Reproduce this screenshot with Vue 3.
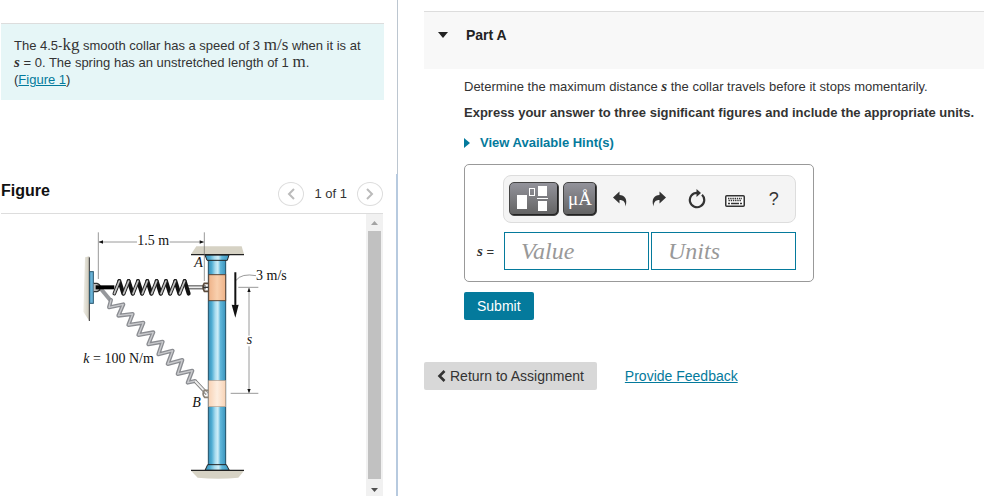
<template>
  <div class="page">
    <aside class="side">
      <section class="intro">
        <p class="problem">
          The 4.5-<span class="math">kg</span> smooth collar has a speed of 3
          <span class="math">m/s</span> when it is at<br />
          <i class="math var">s</i> = 0. The spring has an unstretched length of 1
          <span class="math">m</span>.<br />
          (<a href="#figure">Figure 1</a>)
        </p>
      </section>

      <section class="figure" id="figure">
        <header class="figure-header">
          <h2>Figure</h2>
          <div class="pager">
            <button type="button" class="round" aria-label="Previous figure">
              <svg width="10" height="14" viewBox="0 0 10 14">
                <path d="M8 2L3 7l5 5" fill="none" stroke="#bbb" stroke-width="2" />
              </svg>
            </button>
            <span>1 of 1</span>
            <button type="button" class="round" aria-label="Next figure">
              <svg width="10" height="14" viewBox="0 0 10 14">
                <path d="M2 2l5 5-5 5" fill="none" stroke="#bbb" stroke-width="2" />
              </svg>
            </button>
          </div>
        </header>

        <div class="figure-body">
          <div class="drawing">
            <svg width="220" height="260" viewBox="0 0 660 780">
              <defs>
                <linearGradient id="rod">
                  <stop offset="0" stop-color="#3a8db5" />
                  <stop offset="0.2" stop-color="#4fadd3" />
                  <stop offset="0.4" stop-color="#a9dcef" />
                  <stop offset="0.55" stop-color="#cfeef8" />
                  <stop offset="0.7" stop-color="#5fb6da" />
                  <stop offset="1" stop-color="#3a94bd" />
                </linearGradient>
                <linearGradient id="collarA">
                  <stop offset="0" stop-color="#eeb288" />
                  <stop offset="0.5" stop-color="#f9d0ae" />
                  <stop offset="1" stop-color="#eeb288" />
                </linearGradient>
                <linearGradient id="collarB">
                  <stop offset="0" stop-color="#f8d3b6" />
                  <stop offset="0.5" stop-color="#fdeee0" />
                  <stop offset="1" stop-color="#f8d3b6" />
                </linearGradient>
                <linearGradient id="wall">
                  <stop offset="0" stop-color="#f0eee6" />
                  <stop offset="1" stop-color="#ccc8ba" />
                </linearGradient>
              </defs>

              <!-- supports -->
              <path d="M30 97L43 94V288L25 260Z" fill="url(#wall)" />
              <path d="M43 97V288" stroke="#333" stroke-width="3" />
              <path d="M348 88L364 64H500L507 88Z" fill="#d6d2c4" />
              <path d="M348 737H507L490 758Q430 764 368 758Z" fill="#d6d2c4" />

              <!-- rod -->
              <rect x="400" y="90" width="52" height="640" fill="url(#rod)" />
              <path d="M400 100V725M452 100V725" stroke="#1f4f66" stroke-width="3" />
              <path d="M390 90H462L457 106H396Z" fill="url(#rod)" stroke="#222" stroke-width="3" />
              <path d="M398 719H454L463 736H390Z" fill="url(#rod)" stroke="#222" stroke-width="3" />
              <path d="M348 89H507M348 736H507" stroke="#222" stroke-width="4" />
              <rect x="401" y="149" width="51" height="78" fill="url(#collarA)" stroke="#5c4637" stroke-width="3" />
              <rect x="401" y="467" width="51" height="78" fill="url(#collarB)" stroke="#b89c88" stroke-width="2" />

              <!-- stretched spring -->
              <path d="M78 192L108 228" stroke="#96989c" stroke-width="12" />
              <path :d="stretched" class="coil" stroke="#8b8d92" stroke-width="12" />
              <path :d="stretched" class="coil" stroke="#c9cacd" stroke-width="4" />
              <path d="M360 468L396 506" stroke="#777" stroke-width="11" />
              <path d="M360 468L396 506" stroke="#eee" stroke-width="6" />
              <path d="M400 496H388Q380 508 389 517H400" fill="none" stroke="#8a8378" stroke-width="5" />

              <!-- unstretched spring -->
              <rect x="44" y="140" width="11" height="95" fill="#69b3d8" stroke="#28566d" stroke-width="3" />
              <path d="M56 175H66Q76 178 76 187Q76 197 66 200H56" fill="#bbb" stroke="#333" stroke-width="4" />
              <path d="M62 187H118" stroke="#000" stroke-width="12" />
              <path d="M338 187H392" stroke="#444" stroke-width="12" />
              <path d="M338 187H392" stroke="#eee" stroke-width="6" />
              <path :d="coilBack" class="coil" stroke="#111" stroke-width="12" />
              <path :d="coilFront" class="coil" stroke="#222" stroke-width="11" />
              <path :d="coilFront" class="coil" stroke="#c4c4c4" stroke-width="5" />
              <path d="M400 175H388Q380 187 388 199H400" fill="none" stroke="#5a4a3c" stroke-width="5" />
              <path d="M384 187H400" stroke="#333" stroke-width="4" />

              <!-- dimensions -->
              <g stroke="#666" stroke-width="2" fill="none">
                <path d="M70 22V162M388 22V168M72 51H186M284 51H386" />
                <path d="M490 187H550M467 505H550M522 190V332M522 364V502" />
                <path d="M483 166Q500 144 543 152" />
              </g>
              <g fill="#111">
                <path d="M71 51L84 46V56Z" />
                <path d="M387 51L374 46V56Z" />
                <path d="M522 188L517 201H527Z" />
                <path d="M522 505L517 492H527Z" />
                <path d="M478 142H484V240L491 239L481 278L470 239L478 240Z" />
              </g>

              <g class="labels">
                <text x="187" y="60">1.5 m</text>
                <text x="358" y="126" font-style="italic">A</text>
                <text x="543" y="165">3 m/s</text>
                <text x="515" y="356" font-style="italic">s</text>
                <text x="25" y="415"><tspan font-style="italic">k</tspan> = 100 N/m</text>
                <text x="352" y="545" font-style="italic">B</text>
              </g>
            </svg>
          </div>
          <div class="scrollbar" aria-hidden="true">
            <svg width="17" height="17" viewBox="0 0 17 17"><path d="M5 11h7L8.500 7Z" fill="#a3a3a3" /></svg>
            <div class="thumb"></div>
            <svg width="17" height="17" viewBox="0 0 17 17"><path d="M5 9h7l-3.500 4Z" fill="#505050" /></svg>
          </div>
        </div>
      </section>
    </aside>

    <main class="main">
      <header class="part">
        <button type="button" class="part-toggle" aria-label="Collapse Part A">
          <svg width="10" height="6" viewBox="0 0 10 6"><path d="M0 0h10L5 6Z" fill="#222" /></svg>
        </button>
        <h1>Part A</h1>
      </header>

      <form class="question" @submit.prevent>
        <p>
          Determine the maximum distance <i class="math var">s</i> the collar travels before it stops
          momentarily.
        </p>
        <p class="strong">
          Express your answer to three significant figures and include the appropriate units.
        </p>
        <button type="button" class="hints">
          <svg width="6" height="10" viewBox="0 0 6 10"><path d="M0 0l6 5-6 5Z" fill="#047a9c" /></svg>
          View Available Hint(s)
        </button>

        <div class="answer">
          <div class="toolbar">
            <button type="button" class="tool templates" aria-label="Templates">
              <svg width="50" height="34" viewBox="0 0 50 34" fill="#fff">
                <rect x="8" y="13" width="10" height="14" />
                <rect x="20.500" y="6.500" width="5" height="7" fill="none" stroke="#fff" />
                <rect x="29" y="4" width="9" height="10" />
                <rect x="28" y="16" width="11" height="1" />
                <rect x="29" y="19" width="9" height="10" />
              </svg>
            </button>
            <button type="button" class="tool symbols" aria-label="Symbols">μÅ</button>
            <button type="button" class="plain" aria-label="Undo">
              <svg width="16" height="16" viewBox="0 0 16 16">
                <path d="M1 6.500L7.500 0.500v3.500C12.500 4 16 8 13.500 15.500C13.300 11 11.500 9 7.500 9v3.500Z" fill="#333" />
              </svg>
            </button>
            <button type="button" class="plain" aria-label="Redo">
              <svg width="16" height="16" viewBox="0 0 16 16">
                <path d="M15 6.500L8.500 0.500v3.500C3.500 4 0 8 2.500 15.500C2.700 11 4.500 9 8.500 9v3.500Z" fill="#333" />
              </svg>
            </button>
            <button type="button" class="plain" aria-label="Reset">
              <svg width="18" height="20" viewBox="0 0 18 20">
                <path d="M14 5.800A7.200 7.200 0 1 1 9 3.800" fill="none" stroke="#333" stroke-width="2.200" />
                <path d="M8.500 0L13 4L8.500 8Z" fill="#333" />
              </svg>
            </button>
            <button type="button" class="plain keys" aria-label="Keyboard shortcuts">
              <svg width="20" height="12" viewBox="0 0 20 12">
                <rect x="0.750" y="0.750" width="18.500" height="10.500" rx="1" fill="#fff" stroke="#333" stroke-width="1.500" />
                <path d="M3 3.500h14M3.500 5.500h13" stroke="#333" stroke-width="1.400" stroke-dasharray="1.400 0.800" />
                <path d="M3 8.500h2M6 8.500h8M15 8.500h2" stroke="#333" stroke-width="1.400" />
              </svg>
            </button>
            <button type="button" class="plain help" aria-label="Help">?</button>
          </div>
          <div class="fields">
            <label for="value"><i class="math var">s</i> =</label>
            <input id="value" v-model="value" type="text" placeholder="Value" />
            <input v-model="units" type="text" placeholder="Units" aria-label="Units" />
          </div>
        </div>

        <button type="submit" class="submit">Submit</button>
      </form>

      <footer class="footer">
        <button type="button" class="return">
          <svg width="9" height="12" viewBox="0 0 9 12">
            <path d="M7.500 1L2.500 6l5 5" fill="none" stroke="#333" stroke-width="2.600" />
          </svg>
          Return to Assignment
        </button>
        <a href="#feedback">Provide Feedback</a>
      </footer>
    </main>
  </div>
</template>

<script setup>
import { ref } from 'vue';

const value = ref('');
const units = ref('');

const stretched =
  'M108 225L102 247L145 238L130 272L173 267L160 300L205 293L190 330L235 322L220 358' +
  'L263 350L250 388L293 377L278 417L322 405L308 447L352 437L338 473L360 468';

// each turn of the coil: a light strand in front, then a dark one behind
const turns = Array.from({ length: 8 }, (_, i) => 118 + i * 28);
const coilFront = turns.map((x) => `M${x} 206L${x + 15} 168`).join('');
const coilBack = turns.map((x) => `M${x + 15} 168L${x + 27} 206`).join('');
</script>

<style>
body {
  margin: 0;
  background: #fff;
}
</style>

<style scoped>
.page {
  display: grid;
  grid-template-columns: 398fr 586fr;
  height: 100vh;
  overflow: hidden;
  font-family: 'Liberation Sans', Arial, sans-serif;
  font-size: 13px;
  line-height: 17px;
  color: #333;
}

button,
input {
  box-sizing: border-box;
  margin: 0;
  padding: 0;
  font-family: inherit;
}

button {
  border: 0;
  background: none;
  color: inherit;
  cursor: pointer;
}

svg {
  display: block;
  flex: none;
}

p,
h1,
h2 {
  margin: 0;
}

a {
  color: #047a9c;
}

.math {
  font-family: 'Liberation Serif', serif;
  font-size: 17px;
  line-height: 12px;
}

.math.var {
  font-size: 15px;
  font-weight: bold;
}

.side {
  display: flex;
  flex-direction: column;
  min-width: 0;
  min-height: 0;
}

.intro {
  box-sizing: border-box;
  flex: 0 0 174px;
  padding: 23px 13px 0 1px;
  border-right: 1px solid #bcc6d0;
}

.problem {
  padding: 13px 13px 12px;
  border-top: 1px solid #ddd;
  background: #e6f6f7;
  white-space: nowrap;
}

.figure {
  display: flex;
  flex-direction: column;
  flex: 1;
  min-height: 0;
  padding: 0 13px 0 1px;
  border-right: 2px solid #b7cadf;
}

.figure-header {
  box-sizing: border-box;
  display: flex;
  justify-content: space-between;
  align-items: flex-start;
  height: 40px;
  padding-top: 7px;
  border-bottom: 1px solid #ddd;
}

.figure-header h2 {
  font-size: 16px;
  line-height: 20px;
  color: #111;
}

.pager {
  display: flex;
  align-items: center;
  gap: 10px;
  line-height: 26px;
}

.round {
  display: flex;
  align-items: center;
  justify-content: center;
  width: 26px;
  height: 24px;
  border: 1px solid #ddd;
  border-radius: 50%;
}

.figure-body {
  display: flex;
  flex: 1;
  min-height: 0;
}

.drawing {
  flex: 1;
  padding: 11px 0 0 74px;
  overflow: hidden;
}

.labels {
  font-family: 'Liberation Serif', serif;
  font-size: 42px;
  fill: #111;
}

.coil {
  fill: none;
  stroke-linejoin: round;
  stroke-linecap: round;
}

.scrollbar {
  display: flex;
  flex-direction: column;
  width: 17px;
  background: #f1f1f1;
}

.thumb {
  flex: 1;
  margin: 0 2px;
  background: #c1c1c1;
}

.main {
  min-width: 0;
  padding: 11px 0 0 26px;
}

.part {
  box-sizing: border-box;
  display: flex;
  align-items: flex-start;
  gap: 18px;
  height: 58px;
  padding: 14px 14px 0;
  border-top: 1px solid #ddd;
  background: #f8f8f8;
}

.part-toggle {
  padding: 6px 0;
}

.part h1 {
  font-size: 14px;
  line-height: 18px;
  color: #222;
}

.question {
  display: flex;
  flex-direction: column;
  align-items: flex-start;
  gap: 9px;
  padding: 9px 0 0 40px;
  white-space: nowrap;
}

.strong {
  font-weight: bold;
}

.hints {
  display: flex;
  align-items: center;
  gap: 10px;
  margin: 4px 0;
  font-size: 13px;
  font-weight: bold;
  line-height: 17px;
  color: #047a9c;
}

.answer {
  box-sizing: border-box;
  width: 350px;
  padding: 10px 17px 11px 12px;
  border: 1px solid #999;
  border-radius: 5px;
}

.toolbar {
  box-sizing: border-box;
  display: flex;
  align-items: center;
  height: 48px;
  margin-left: 26px;
  padding: 0 2px 0 5px;
  border: 1px solid #ddd;
  border-radius: 8px;
  background: #f4f4f4;
}

.tool {
  height: 34px;
  margin-right: 4px;
  border: 1px solid #444;
  border-radius: 5px;
  background: linear-gradient(#93939b, #626262);
  box-shadow: inset -1px -1px #222;
  color: #fff;
}

.templates {
  display: flex;
  align-items: center;
  justify-content: center;
  width: 50px;
}

.symbols {
  width: 34px;
  font-family: 'Liberation Serif', serif;
  font-size: 19px;
  line-height: 32px;
}

.plain {
  display: flex;
  flex: 1;
  align-items: center;
  justify-content: center;
  height: 34px;
}

.keys {
  padding-top: 4px;
}

.help {
  font-size: 18px;
}

.fields {
  display: flex;
  align-items: center;
  gap: 2px;
  margin-top: 9px;
}

.fields label {
  width: 25px;
}

.fields input {
  flex: 1;
  min-width: 0;
  height: 38px;
  padding: 0 16px;
  border: 1px solid #047a9c;
  background: #fff;
  font-family: 'Liberation Serif', serif;
  font-size: 24px;
}

.fields input::placeholder {
  color: #999;
  font-style: italic;
  opacity: 1;
}

.submit {
  height: 28px;
  margin-top: 1px;
  padding: 0 13px;
  border-radius: 2px;
  background: #047a9c;
  font-size: 14px;
  color: #fff;
}

.footer {
  display: flex;
  align-items: center;
  gap: 28px;
  margin-top: 42px;
  font-size: 14px;
}

.return {
  display: flex;
  align-items: center;
  gap: 4px;
  height: 28px;
  padding: 0 13px;
  border-radius: 2px;
  background: #d8d8d8;
  font-size: 14px;
}
</style>
